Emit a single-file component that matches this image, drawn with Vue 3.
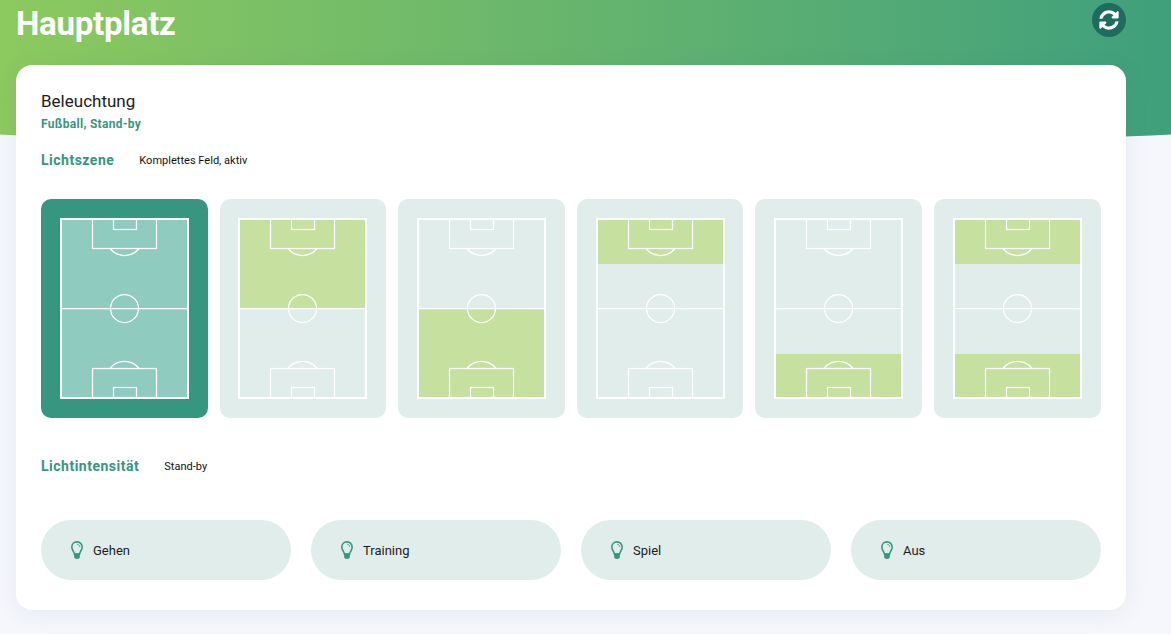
<script setup>
const scenes = [
  { active: true, zones: [] },
  { zones: [[0, 90]] },
  { zones: [[90, 91]] },
  { zones: [[0, 46]] },
  { zones: [[136, 45]] },
  { zones: [[0, 46], [136, 45]] },
]
const levels = ['Gehen', 'Training', 'Spiel', 'Aus']
</script>

<template>
  <div class="page">
    <div class="wave"></div>
    <header class="top">
      <h1>Hauptplatz</h1>
      <button class="refresh" aria-label="Aktualisieren">
        <svg viewBox="0 0 512 512" width="20" height="20">
          <path fill="#fff" d="M370.72 133.28C339.458 104.008 298.888 87.962 255.848 88c-77.458.068-144.328 53.178-162.791 126.85-1.344 5.363-6.122 9.15-11.651 9.15H24.103c-7.498 0-13.194-6.807-11.807-14.176C33.933 94.924 134.813 8 256 8c66.448 0 126.791 26.136 171.315 68.685L463.03 40.97C478.149 25.851 504 36.559 504 57.941V192c0 13.255-10.745 24-24 24H345.941c-21.382 0-32.09-25.851-16.971-40.971l41.75-41.749zM32 296h134.059c21.382 0 32.09 25.851 16.971 40.971l-41.75 41.75c31.262 29.273 71.835 45.319 114.876 45.28 77.418-.07 144.315-53.144 162.787-126.849 1.344-5.363 6.122-9.15 11.651-9.15h57.304c7.498 0 13.194 6.807 11.807 14.176C478.067 417.076 377.187 504 256 504c-66.448 0-126.791-26.136-171.315-68.685L48.97 471.03C33.851 486.149 8 475.441 8 454.059V320c0-13.255 10.745-24 24-24z"/>
        </svg>
      </button>
    </header>

    <main class="card">
      <h2>Beleuchtung</h2>
      <p class="sub">Fußball, Stand-by</p>

      <div class="label-row scene-label">
        <span class="label">Lichtszene</span>
        <span class="value">Komplettes Feld, aktiv</span>
      </div>

      <div class="scenes">
        <div v-for="(s, i) in scenes" :key="i" class="scene" :class="{ active: s.active }">
          <svg class="field" viewBox="0 0 129 181" width="129" height="181">
            <rect v-if="s.active" x="0" y="0" width="129" height="181" fill="#8fcbbf" />
            <rect v-for="(z, j) in s.zones" :key="j" x="0" :y="z[0]" width="129" :height="z[1]" fill="#c6e0a0" />
            <g fill="none" stroke="#fff" stroke-width="1.25">
              <rect x="32.5" y="1" width="64" height="29.5" />
              <rect x="53.5" y="1" width="23" height="10.5" />
              <path d="M50 30.5 A 18.5 18.5 0 0 0 79 30.5" />
              <rect x="32.5" y="150.5" width="64" height="29" />
              <rect x="53.5" y="169.5" width="23" height="10.5" />
              <path d="M50 150.5 A 18.5 18.5 0 0 1 79 150.5" />
              <line x1="1" y1="90.5" x2="128" y2="90.5" />
              <circle cx="64.5" cy="90.5" r="14" />
              <rect x="1" y="1" width="127" height="179" stroke-width="2" />
            </g>
          </svg>
        </div>
      </div>

      <div class="label-row intensity-label">
        <span class="label">Lichtintensität</span>
        <span class="value">Stand-by</span>
      </div>

      <div class="levels">
        <button v-for="l in levels" :key="l" class="level">
          <svg viewBox="0 0 13 18" width="12" height="18" preserveAspectRatio="none">
            <path fill="none" stroke="#36967f" stroke-width="1.7" d="M6.5 .9C3.3 .9 .9 3.2 .9 6.2c0 2.8 2.3 4.2 2.9 7h5.4c.6-2.8 2.9-4.2 2.9-7C12.1 3.2 9.7 .9 6.500 .9z"/>
            <path fill="#36967f" d="M3.4 12.500h6.200v3.500c0 1.200-1.400 2-3.100 2s-3.100-.8-3.100-2z"/>
            <path fill="none" stroke="#36967f" stroke-width=".8" d="M6.5 3.2c1.700 0 3 1.200 3 2.800"/>
          </svg>
          <span>{{ l }}</span>
        </button>
      </div>
    </main>
  </div>
</template>

<style scoped>
.page {
  position: relative;
  min-height: 634px;
  padding: 0 45px 24px 16px;
  box-sizing: border-box;
  font-family: "Roboto", "Liberation Sans", sans-serif;
  color: #1c1c1c;
  overflow: hidden;
}
.wave {
  position: absolute;
  left: -120px;
  right: -120px;
  top: -40px;
  height: 185px;
  background: linear-gradient(90deg, #8fcb5f 0%, #8cc95f 9%, #40a07c 91%, #40a07c 100%);
  border-radius: 0 0 50% 50% / 0 0 24px 24px;
}
.top {
  position: relative;
  display: flex;
  justify-content: space-between;
  align-items: flex-start;
  height: 65px;
}
h1 {
  margin: 0;
  font-size: 33px;
  line-height: 48px;
  font-weight: 700;
  color: #fff;
  letter-spacing: -.25px;
}
.refresh {
  margin-top: 3px;
  width: 34px;
  height: 34px;
  padding: 0;
  border: 0;
  border-radius: 50%;
  background: #1f6b5d;
  display: flex;
  align-items: center;
  justify-content: center;
}
.card {
  position: relative;
  background: #fff;
  border-radius: 16px;
  height: 545px;
  box-sizing: border-box;
  padding: 25px 25px 30px;
  box-shadow: 0 4px 24px rgba(60, 80, 120, .08);
}
h2 {
  margin: 0;
  font-size: 17px;
  line-height: 22px;
  font-weight: 400;
}
.sub {
  margin: 5px 0 0;
  font-size: 12px;
  line-height: 15px;
  font-weight: 700;
  color: #36967f;
  letter-spacing: .3px;
}
.label-row {
  display: flex;
  align-items: center;
  gap: 25px;
}
.scene-label { margin-top: 17px; height: 22px; }
.intensity-label { margin-top: 37px; height: 22px; }
.label {
  font-size: 14px;
  font-weight: 700;
  color: #36967f;
  letter-spacing: .5px;
}
.value { font-size: 11px; color: #111; letter-spacing: .02px; }
.scenes {
  margin-top: 28px;
  display: grid;
  grid-template-columns: repeat(6, 166.6px);
  gap: 12px;
}
.scene {
  height: 219px;
  background: #e1edea;
  border-radius: 10px;
  display: flex;
  align-items: center;
  justify-content: center;
}
.scene.active { background: #36967f; }
.field { display: block; }
.levels {
  margin-top: 43px;
  display: grid;
  grid-template-columns: repeat(4, 1fr);
  gap: 20px;
}
.level {
  height: 60px;
  border: 0;
  border-radius: 30px;
  background: #e1edea;
  padding: 0 0 0 30px;
  display: flex;
  align-items: center;
  gap: 10px;
  font: 400 13px "Roboto", "Liberation Sans", sans-serif;
  color: #1c1c1c;
}
</style>

<style>
html, body { background: #f5f7fc; }
</style>
